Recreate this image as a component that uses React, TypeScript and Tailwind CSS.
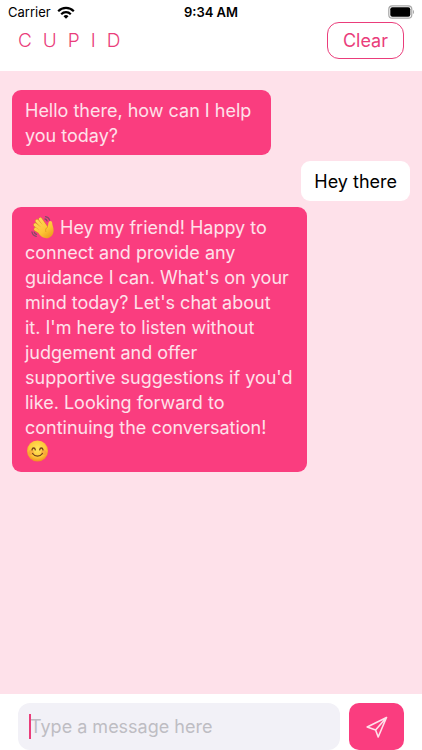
import { useState } from "react";
import type { FormEvent, ReactNode } from "react";
import clsx from "clsx";

type Message = {
  id: number;
  from: "bot" | "user";
  width: string;
  body: ReactNode;
};

const WaveEmoji = () => (
  <svg
    viewBox="0 0 24 24"
    className="ml-1.5 inline-block h-6 w-6 align-top"
    role="img"
    aria-label="waving hand"
  >
    <defs>
      <linearGradient
        id="hand"
        gradientUnits="userSpaceOnUse"
        x1="5"
        y1="4"
        x2="20"
        y2="23"
      >
        <stop offset="0" stopColor="#ffd95c" />
        <stop offset="0.6" stopColor="#fdc535" />
        <stop offset="1" stopColor="#ec981a" />
      </linearGradient>
    </defs>
    <g fill="none" stroke="#d98f1c" strokeLinecap="round" strokeWidth="3.8">
      <path d="M14.5 11.5 9.3 4.2" />
      <path d="M13 13.5 6 6" />
      <path d="M11.5 15.5 4.2 9.8" />
      <path d="M11 18.2 4.6 14.2" />
    </g>
    <g fill="none" stroke="url(#hand)" strokeLinecap="round" strokeWidth="3">
      <path d="M14.5 11.5 9.3 4.2" />
      <path d="M13 13.5 6 6" />
      <path d="M11.5 15.5 4.2 9.8" />
      <path d="M11 18.2 4.6 14.2" />
    </g>
    <path
      fill="url(#hand)"
      d="M12.5 8.2 16.6 12c.8-1.4.4-3.2 1.2-4.9.8-1.7 3.4-1.2 3.4 1 0 2.4 1.6 4.4 1.4 7.8-.3 4.3-3.4 7.3-7.2 7.3-3.4 0-5.5-1.9-7.6-4.4L8 14.5z"
    />
    <path
      fill="none"
      stroke="#d98f1c"
      strokeWidth="0.7"
      strokeLinecap="round"
      d="M16.6 12c-1.7 1-2.4 2.7-1.9 4.5"
    />
    <g fill="none" stroke="#864a68" strokeWidth="1.3" strokeLinecap="round">
      <path d="M14.5 1.6c2.2.3 3.5 1.5 4.1 3.5M14 4c1.1.3 1.7 1 2.1 2" />
      <path d="M1 17c.4 2.4 1.8 3.8 4.2 4.3M3.2 17.2c.4 1.1 1.1 1.8 2.3 2.1" />
    </g>
  </svg>
);

const SmileEmoji = () => (
  <svg
    viewBox="0 1 24 24"
    className="inline-block h-6 w-6 align-top"
    role="img"
    aria-label="smiling face"
  >
    <defs>
      <radialGradient id="face" cx="0.5" cy="0.4" r="0.6">
        <stop offset="0" stopColor="#ffe65e" />
        <stop offset="0.65" stopColor="#fdc93a" />
        <stop offset="1" stopColor="#f0901e" />
      </radialGradient>
    </defs>
    <circle cx="12.5" cy="12" r="10.5" fill="url(#face)" />
    <circle cx="6.3" cy="13.4" r="2.6" fill="#f58a3c" opacity="0.45" />
    <circle cx="18.7" cy="13.4" r="2.6" fill="#f58a3c" opacity="0.45" />
    <g fill="none" stroke="#74411a" strokeWidth="1.3" strokeLinecap="round">
      <path d="M7 10.8c.4-2.4 2.9-2.4 3.3 0M14.7 10.8c.4-2.4 2.9-2.4 3.3 0" />
      <path d="M7.6 14.5c2.3 3.4 7.5 3.4 9.8 0" />
    </g>
  </svg>
);

const messages: Message[] = [
  {
    id: 1,
    from: "bot",
    width: "w-[65%]",
    body: "Hello there, how can I help you today?",
  },
  { id: 2, from: "user", width: "max-w-[70%]", body: "Hey there" },
  {
    id: 3,
    from: "bot",
    width: "w-[74%]",
    body: (
      <>
        <WaveEmoji /> Hey my friend! Happy to connect and provide any guidance I
        can. What's on your mind today? Let's chat about
        <br />
        it. I'm here to listen without
        <br />
        judgement and offer
        <br />
        supportive suggestions if you'd
        <br />
        like. Looking forward to
        <br />
        continuing the conversation!
        <br />
        <SmileEmoji />
      </>
    ),
  },
];

const StatusBar = () => (
  <div className="grid h-[22px] grid-cols-3 items-center px-2 pt-0.5 text-[13px] leading-4 text-black">
    <div className="flex items-center gap-1.5">
      <span>Carrier</span>
      <svg viewBox="0 0 18 13" className="h-[13px] w-[18px]" aria-hidden="true">
        <g fill="none" stroke="currentColor" strokeWidth="2.2">
          <path d="M1.2 5.2a11 11 0 0 1 15.6 0" />
          <path d="M4.2 8.2a6.8 6.8 0 0 1 9.6 0" />
        </g>
        <path fill="currentColor" d="M9 12.7 6.5 10.2a3.6 3.6 0 0 1 5 0z" />
      </svg>
    </div>
    <span className="text-center font-semibold">9:34 AM</span>
    <svg
      viewBox="0 0 28 14"
      className="h-[14px] w-7 justify-self-end"
      aria-hidden="true"
    >
      <rect
        x="2.8"
        y="0.8"
        width="23"
        height="12.4"
        rx="3.5"
        fill="none"
        stroke="#a6a6a6"
        strokeWidth="1.2"
      />
      <rect x="4.3" y="2.3" width="20" height="9.4" rx="2" />
      <path d="M27 5c1.3.6 1.3 3.4 0 4z" fill="#a6a6a6" />
    </svg>
  </div>
);

export default function App() {
  const [text, setText] = useState("");
  const [chat, setChat] = useState(messages);

  const onSubmit = (e: FormEvent) => {
    e.preventDefault();
    if (!text.trim()) return;
    setChat((prev) => [
      ...prev,
      { id: Date.now(), from: "user", width: "max-w-[70%]", body: text },
    ]);
    setText("");
  };

  return (
    <div className="flex min-h-screen flex-col bg-[#fee1ea] font-['Inter','Liberation_Sans',sans-serif]">
      <div className="bg-white pb-3">
        <StatusBar />
        <header className="flex items-center justify-between px-[18px]">
          <h1 className="flex gap-[11px] text-[19px] leading-[25px] font-light text-[#ea3d7b]">
            {"CUPID".split("").map((letter) => (
              <span key={letter}>{letter}</span>
            ))}
          </h1>
          <button
            type="button"
            onClick={() => setChat([])}
            className="rounded-xl border border-[#ea3d7b] px-[15px] py-[5px] text-[18px] leading-[25px] text-[#ea3d7b]"
          >
            Clear
          </button>
        </header>
      </div>

      <main className="flex flex-1 flex-col gap-[6px] px-3 pt-[19px] pb-3">
        {chat.map((message) => (
          <p
            key={message.id}
            className={clsx(
              "rounded-[9px] pt-2 pb-[7px] pl-[13px] text-[18px] leading-[25px]",
              message.width,
              message.from === "bot"
                ? "self-start bg-[#fa3d7f] pr-2 text-[#fee1ea]"
                : "self-end bg-white pr-[13px] text-black"
            )}
          >
            {message.body}
          </p>
        ))}
      </main>

      <form
        onSubmit={onSubmit}
        className="flex gap-[9px] bg-white px-[18px] pt-[9px]"
      >
        <div className="relative flex-1">
          <input
            type="text"
            aria-label="Message"
            value={text}
            onChange={(e) => setText(e.target.value)}
            placeholder="Type a message here"
            className="block h-[47px] w-full rounded-xl bg-[#f2f1f7] px-3 text-[18px] text-black caret-[#ea3d7b] outline-none placeholder:text-[#bebdc3]"
          />
          {!text && (
            <span className="pointer-events-none absolute top-[11px] left-[11px] h-[25px] w-[2px] bg-[#ea3d7b]" />
          )}
        </div>
        <button
          type="submit"
          aria-label="Send"
          className="flex h-[47px] w-[55px] items-center justify-center rounded-[10px] bg-[#fa3d7f] text-[#fee1ea]"
        >
          <svg
            viewBox="0 0 22 22"
            className="h-[22px] w-[22px]"
            fill="none"
            stroke="currentColor"
            strokeWidth="1.6"
            strokeLinejoin="round"
            strokeLinecap="round"
          >
            <path d="M20.5 1.5 1.2 11l8.4 3 2.6 7zM20.5 1.5 9.6 14" />
          </svg>
        </button>
      </form>
    </div>
  );
}
